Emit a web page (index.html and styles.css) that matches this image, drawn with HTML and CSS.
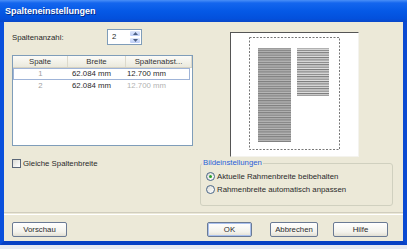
FILE: index.html
```html
<!DOCTYPE html>
<html lang="de">
<head>
    <meta charset="UTF-8">
    <meta name="viewport" content="width=device-width, initial-scale=1.0">
    <title>Spalteneinstellungen</title>
    <link rel="stylesheet" href="styles.css">
</head>
<body>
    <div class="window">
        <div class="titlebar">Spalteneinstellungen</div>
        <div class="frame">
            <div class="content">
                <div class="left">
                    <div class="count-row">
                        <span class="count-label">Spaltenanzahl:</span>
                        <div class="spinner">
                            <span class="spin-value">2</span>
                            <div class="spin-buttons">
                                <span class="spin-btn">
                                    <svg width="5" height="3" viewBox="0 0 5 3"><path d="M0 3 L2.5 0 L5 3 Z" fill="#4d6185"/></svg>
                                </span>
                                <span class="spin-btn">
                                    <svg width="5" height="3" viewBox="0 0 5 3"><path d="M0 0 L2.5 3 L5 0 Z" fill="#4d6185"/></svg>
                                </span>
                            </div>
                        </div>
                    </div>
                    <div class="listview">
                        <div class="lv-row lv-head">
                            <span>Spalte</span>
                            <span>Breite</span>
                            <span>Spaltenabst...</span>
                        </div>
                        <div class="lv-row lv-item lv-focus">
                            <span class="lv-num">1</span>
                            <span>62.084 mm</span>
                            <span>12.700 mm</span>
                        </div>
                        <div class="lv-row lv-item">
                            <span class="lv-num">2</span>
                            <span>62.084 mm</span>
                            <span class="lv-off">12.700 mm</span>
                        </div>
                    </div>
                </div>

                <div class="preview">
                    <svg width="127" height="123" viewBox="0 0 127 123">
                        <defs>
                            <pattern id="lines1" width="4" height="2.4" patternUnits="userSpaceOnUse">
                                <rect width="4" height="2.4" fill="#b8b8b8"/>
                                <rect width="4" height="1.1" fill="#7c7c7c"/>
                            </pattern>
                            <pattern id="lines2" width="4" height="2.4" patternUnits="userSpaceOnUse">
                                <rect width="4" height="2.4" fill="#e2e2e2"/>
                                <rect width="4" height="1.1" fill="#767676"/>
                            </pattern>
                        </defs>
                        <rect x="18.5" y="4.5" width="90" height="112" fill="none" stroke="#777" stroke-dasharray="2 1.5"/>
                        <rect x="27" y="15" width="33" height="94" fill="url(#lines1)"/>
                        <rect x="66" y="15" width="32" height="48" fill="url(#lines2)"/>
                    </svg>
                </div>

                <label class="check">
                    <span class="check-box"></span>
                    Gleiche Spaltenbreite
                </label>

                <fieldset class="group">
                    <legend>Bildeinstellungen</legend>
                    <div class="radio"><span class="radio-dot checked"></span>Aktuelle Rahmenbreite beibehalten</div>
                    <div class="radio"><span class="radio-dot"></span>Rahmenbreite automatisch anpassen</div>
                </fieldset>
            </div>

            <div class="separator"></div>

            <div class="buttons">
                <button class="btn btn-preview">Vorschau</button>
                <button class="btn btn-ok">OK</button>
                <button class="btn btn-cancel">Abbrechen</button>
                <button class="btn btn-help">Hilfe</button>
            </div>
        </div>
        <div class="behind"></div>
    </div>
</body>
</html>
```

FILE: styles.css
```css
body {
    margin: 0;
    padding: 0;
    font-family: "Liberation Sans", Arial, sans-serif;
    font-size: 7.8px;
    color: #2a2a2a;
    background: #e9ecf3;
}
.window {
    width: 407px;
    height: 249px;
    overflow: hidden;
}
.titlebar {
    height: 22px;
    box-sizing: border-box;
    padding: 5px 0 0 5px;
    font-size: 9px;
    font-weight: bold;
    color: #fff;
    line-height: 12px;
    background: linear-gradient(#4a8ff7 0, #1466ee 3px, #0559e6 50%, #0350dc 85%, #0a48c8 100%);
    text-shadow: 1px 1px 0 #0a2f8a;
}
.frame {
    height: 223px;
    box-sizing: border-box;
    background: #ece9d8;
    border-left: 4px solid #0a50dc;
    border-right: 4px solid #0a4ad2;
    border-bottom: 4px solid #0841c4;
}
.content {
    display: grid;
    grid-template-columns: 181px 193px;
    grid-template-rows: 128px 48px;
    column-gap: 7px;
    row-gap: 1px;
    padding: 7px 10px 0 8px;
}
.count-row {
    display: flex;
    align-items: center;
    height: 16px;
}
.count-label {
    width: 95px;
}
.spinner {
    display: flex;
    width: 35px;
    height: 16px;
    box-sizing: border-box;
    border: 1px solid #7f9db9;
    background: #fff;
}
.spin-value {
    flex: 1;
    padding-left: 4px;
    line-height: 14px;
}
.spin-buttons {
    display: flex;
    flex-direction: column;
    width: 12px;
}
.spin-btn {
    flex: 1;
    display: flex;
    align-items: center;
    justify-content: center;
    background: linear-gradient(#dfe8fd, #bccdf6);
    border: 1px solid #fff;
    border-radius: 2px;
}
.listview {
    margin-top: 10px;
    height: 91px;
    box-sizing: border-box;
    border: 1px solid #7f9db9;
    background: #fff;
}
.lv-row {
    display: grid;
    grid-template-columns: 55px 58px 1fr;
    height: 12px;
    line-height: 12px;
    margin-right: 2px;
}
.lv-head {
    height: 11px;
    line-height: 11px;
    margin-right: 0;
    background: linear-gradient(#fbfbf8, #ebe9dc);
    border-bottom: 1px solid #d5d2c3;
}
.lv-head span {
    text-align: center;
    border-right: 1px solid #dcd9cc;
    color: #333;
}
.lv-item span {
    padding-left: 4px;
}
.lv-item span:last-child {
    padding-left: 1px;
}
.lv-item .lv-num {
    padding-left: 0;
    text-align: center;
    color: #a0a0a0;
}
.lv-focus {
    box-shadow: inset 0 0 0 1px #9fb4d8;
}
.lv-off {
    color: #b2b2b2;
}
.preview {
    margin: 3px 0 0 30px;
    width: 129px;
    height: 125px;
    box-sizing: border-box;
    background: #fff;
    border-top: 1px solid #555;
    border-left: 1px solid #555;
    border-right: 1px solid #f4f3ee;
    border-bottom: 1px solid #f4f3ee;
}
.preview svg {
    display: block;
}
.check {
    display: flex;
    align-items: flex-start;
    gap: 2px;
    margin-top: 1px;
    line-height: 9px;
}
.check-box {
    width: 9px;
    height: 9px;
    box-sizing: border-box;
    border: 1px solid #5a6678;
    background: linear-gradient(135deg, #dcdcd6, #fff);
}
.group {
    margin: 0;
    padding: 2px 0 0 0;
    height: 48px;
    box-sizing: border-box;
    border: 1px solid #d0d0bf;
    border-radius: 3px;
}
.group legend {
    margin-left: 1px;
    padding: 0 1px;
    color: #2a5fd8;
    line-height: 10px;
}
.radio {
    display: flex;
    align-items: center;
    gap: 2px;
    height: 13px;
    padding-left: 5px;
}
.radio-dot {
    position: relative;
    width: 9px;
    height: 9px;
    box-sizing: border-box;
    border: 1px solid #4a6688;
    border-radius: 50%;
    background: linear-gradient(135deg, #dcdcd6, #fff);
}
.radio-dot.checked::after {
    content: "";
    position: absolute;
    left: 2px;
    top: 2px;
    width: 3px;
    height: 3px;
    border-radius: 50%;
    background: #2aa12a;
}
.separator {
    margin-top: 6px;
    height: 1px;
    border-top: 1px solid #d0cdbe;
    border-bottom: 1px solid #fff;
}
.buttons {
    display: flex;
    margin-top: 7px;
    padding: 0 15px 0 8px;
}
.btn {
    height: 15px;
    padding: 0;
    font-family: inherit;
    font-size: 7.8px;
    color: #2a2a2a;
    background: linear-gradient(#fff, #f3f2ec 70%, #e2dfd3);
    border: 1px solid #6a7a94;
    border-radius: 2px;
    cursor: pointer;
}
.btn-preview {
    width: 55px;
}
.btn-ok {
    width: 45px;
    margin-left: auto;
    box-shadow: inset 0 0 0 1px #a9c0ee;
}
.btn-cancel {
    width: 48px;
    margin-left: 18px;
}
.btn-help {
    width: 55px;
    margin-left: 15px;
}
.behind {
    height: 4px;
    background: #e6e9f1;
}
```
